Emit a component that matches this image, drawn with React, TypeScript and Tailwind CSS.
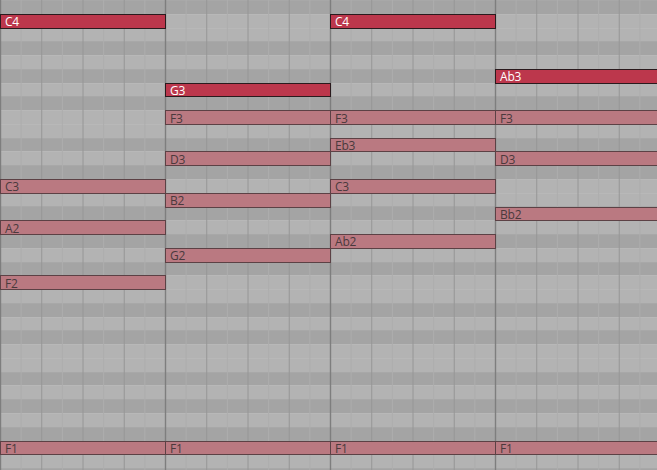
import React from 'react';

const ROW_H = 13.77;
const BAR_W = 165;
const TOP_MIDI = 61;
const ROW_COUNT = 35;

const BLACK = [1, 3, 6, 8, 10];

type Note = { bar: number; midi: number; label: string; hot?: boolean };

const NOTES: Note[] = [
  // bar 1
  { bar: 0, midi: 60, label: 'C4', hot: true },
  { bar: 0, midi: 48, label: 'C3' },
  { bar: 0, midi: 45, label: 'A2' },
  { bar: 0, midi: 41, label: 'F2' },
  { bar: 0, midi: 29, label: 'F1' },
  // bar 2
  { bar: 1, midi: 55, label: 'G3', hot: true },
  { bar: 1, midi: 53, label: 'F3' },
  { bar: 1, midi: 50, label: 'D3' },
  { bar: 1, midi: 47, label: 'B2' },
  { bar: 1, midi: 43, label: 'G2' },
  { bar: 1, midi: 29, label: 'F1' },
  // bar 3
  { bar: 2, midi: 60, label: 'C4', hot: true },
  { bar: 2, midi: 53, label: 'F3' },
  { bar: 2, midi: 51, label: 'Eb3' },
  { bar: 2, midi: 48, label: 'C3' },
  { bar: 2, midi: 44, label: 'Ab2' },
  { bar: 2, midi: 29, label: 'F1' },
  // bar 4
  { bar: 3, midi: 56, label: 'Ab3', hot: true },
  { bar: 3, midi: 53, label: 'F3' },
  { bar: 3, midi: 50, label: 'D3' },
  { bar: 3, midi: 46, label: 'Bb2' },
  { bar: 3, midi: 29, label: 'F1' },
];

function GridLines() {
  const lines = [];
  for (let k = 0; k <= 32; k++) {
    const x = k * (BAR_W / 8);
    let color = '#adadad';
    let w = 1;
    if (k % 8 === 0) {
      color = '#7e7e7e';
      w = 1.4;
    } else if (k % 2 === 0) {
      color = '#969696';
    }
    lines.push(
      <line key={k} x1={x + 0.5} x2={x + 0.5} y1={0} y2={470} stroke={color} strokeWidth={w} />
    );
  }
  return (
    <svg className="absolute inset-0 pointer-events-none" width={657} height={470}>
      {lines}
    </svg>
  );
}

export default function App() {
  const rows = Array.from({ length: ROW_COUNT }, (_, i) => TOP_MIDI - i);

  return (
    <div
      className="relative w-[657px] h-[470px] overflow-hidden bg-[#a5a5a5]"
      style={{ fontFamily: '"Open Sans", "Noto Sans", sans-serif' }}
    >
      {/* key rows */}
      <div className="flex flex-col">
        {rows.map(m => {
          const black = BLACK.includes(m % 12);
          return (
            <div
              key={m}
              className={
                black
                  ? 'h-[13.77px] shrink-0 bg-[#a4a4a4] border-t border-[#a8a8a8]'
                  : 'h-[13.77px] shrink-0 bg-[#b3b3b3] border-t border-[#b8b8b8]'
              }
            />
          );
        })}
      </div>

      <GridLines />

      {/* notes */}
      {NOTES.map((n, i) => (
        <div
          key={i}
          className={`absolute flex items-center pl-[4px] pt-[2px] text-[12px] leading-none tracking-[-0.2px] border ${
            n.hot
              ? 'bg-[#bc374c] border-[#2a1a1d] text-white'
              : 'bg-[#ba7981] border-[#5c4145] text-[#4a3a3d]'
          }`}
          style={{
            left: n.bar * BAR_W,
            top: (TOP_MIDI - n.midi) * ROW_H,
            width: BAR_W + 1,
            height: ROW_H + 1,
          }}
        >
          {n.label}
        </div>
      ))}
    </div>
  );
}
